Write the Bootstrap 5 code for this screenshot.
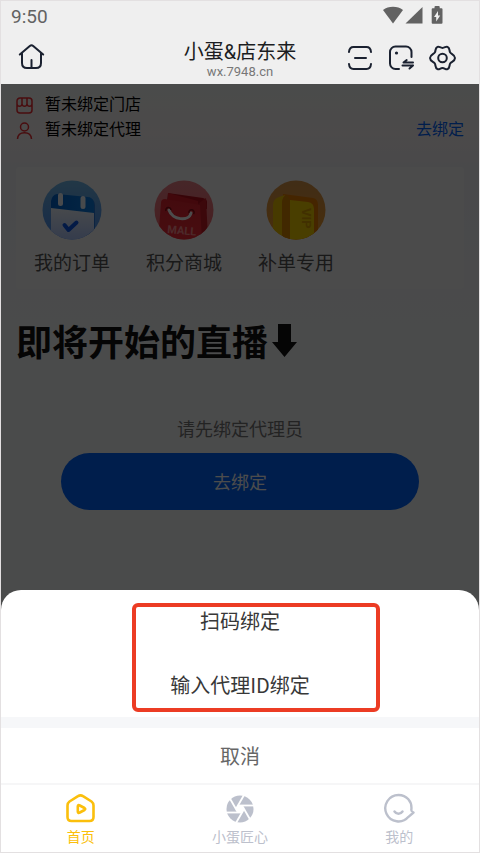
<!DOCTYPE html>
<html lang="zh-CN">
<head>
<meta charset="utf-8">
<meta name="viewport" content="width=device-width, initial-scale=1">
<title>小蛋&amp;店东来</title>
<link href="https://cdn.jsdelivr.net/npm/bootstrap@5.3.0/dist/css/bootstrap.min.css" rel="stylesheet">
<style>
body{font-family:"Noto Sans CJK SC",sans-serif;background:#fff}
svg{display:block;flex:none}
a{text-decoration:none}
button{font-family:inherit}
.latin{font-family:Roboto,sans-serif}
.app-shell{border:1px solid #e3e0e1}
.app-top{background:#efefef;color:#1b1d22}
.status-row{height:30px;color:#626262}
.clock{font-size:19px;line-height:32px;padding-left:10px}
.status-icons{margin-right:24px}
.title-row{height:53px;padding:0 23px 0 17px}
.side-zone{flex:1 1 0}
.title-zone{padding-left:6px}
.app-title{font-family:Roboto,"Noto Sans CJK SC",sans-serif;font-size:20px;line-height:24px;font-weight:400;padding-top:4px}
.app-url{font-size:13px;line-height:16px;color:#777}
.icon-btn{border:0;background:none;padding:0;color:#1a2130}
.tool-gap{gap:14px}
.stage{background:linear-gradient(#f8fcfa 0,#fdf7f7 50px,#f4f5f9 90px,#f9fafc 240px)}
.bind-info{font-size:16px;line-height:25px;color:#000;padding:7px 15px 0 15px}
.bind-info svg{color:#f22c32;margin-top:4px}
.bind-link{color:#0066ff}
.menu-card{background:#fbfbfb;margin:26px 15px 0;padding:13px 0;border-radius:4px}
.menu-card a{width:25%;color:#555;font-size:19px;line-height:28px;gap:8px}
.live-title{font-size:36px;line-height:48px;font-weight:700;color:#111;margin:27px 0 0 15px;gap:4px}
.tip{font-size:18px;line-height:26px;color:#777;margin-top:51px}
.bind-btn{background:#0066ff;color:#fff;font-size:18px;line-height:26px;padding:15px 15px 16px;margin:12px 60px 0;border:0}
.dim{position:absolute;inset:0;background:rgba(0,0,0,.7)}
.sheet{position:absolute;left:0;right:0;bottom:0;background:#fff;border-radius:20px 20px 0 0;overflow:hidden}
.sheet button{display:block;width:100%;border:0;background:none;color:#383838;font-size:20px;line-height:28px}
.choice{padding:18px 0}
.choice:first-child{padding-top:17px}
.cancel-row{border-top:11px solid #f6f7f9 !important;padding:14px 0 13px}
.sheet .cancel-row{color:#666}
.callout-frame{position:absolute;left:50%;top:13px;width:248px;height:109px;margin-left:-108px;border:4px solid #ec3c24;border-radius:6px;pointer-events:none}
.tabs{border-top:2px solid #f6f6f7;background:#fff;padding:7px 0 6px}
.tabs a{flex:1 1 0;color:#bcc0cc;font-size:14px;line-height:20px}
.tabs a.on{color:#fbbf0c}
</style>
<script src="https://cdn.jsdelivr.net/npm/bootstrap@5.3.0/dist/js/bootstrap.bundle.min.js"></script>
</head>
<body>
<div class="app-shell min-vh-100 d-flex flex-column">
  <header class="app-top">
    <div class="status-row latin d-flex justify-content-between">
      <span class="clock">9:50</span>
      <svg class="status-icons" width="90" height="30" viewBox="0 0 90 30" fill="#626262" aria-hidden="true">
        <path d="M18 9C21 6.500 24 5.800 28 5.800s7 .7 10 3.200L28 22.500z"/>
        <path d="M57.500 6v16.500h-17z"/>
        <path fill-rule="evenodd" d="M70.500 5h3.200a1 1 0 0 1 1 1v1.200H76.500a1 1 0 0 1 1 1v13.600a1 1 0 0 1-1 1h-8.800a1 1 0 0 1-1-1V8.200a1 1 0 0 1 1-1h1.800V6a1 1 0 0 1 1-1zM73 10l-4 6h2.200v4.500l4-6H73z"/>
      </svg>
    </div>
    <div class="title-row d-flex align-items-center">
      <div class="side-zone">
        <button class="icon-btn" aria-label="主页">
          <svg width="27" height="28" viewBox="0 -1 27 28" fill="none" stroke="currentColor" stroke-width="2" stroke-linecap="round" stroke-linejoin="round"><path d="M1.800 12.500 11.800 4a2.600 2.600 0 0 1 3.400 0l10 8.500M4 11.500V21c0 3.500 1.500 5 5 5h9c3.500 0 5-1.500 5-5v-9.500M13.500 18v7"/></svg>
        </button>
      </div>
      <div class="title-zone text-center">
        <h1 class="app-title m-0">小蛋&amp;店东来</h1>
        <div class="app-url latin">wx.7948.cn</div>
      </div>
      <div class="side-zone d-flex justify-content-end tool-gap">
        <button class="icon-btn" aria-label="扫一扫">
          <svg width="26" height="28" viewBox="0 0 26 28" fill="none" stroke="currentColor" stroke-width="2" stroke-linecap="round"><path d="M2 8C2.300 4.500 4 3 6.500 3h13c2.500 0 4.200 1.500 4.500 5M2 20c.3 3.500 2 5 4.500 5h13c2.500 0 4.200-1.500 4.500-5M8 14h11"/></svg>
        </button>
        <button class="icon-btn" aria-label="切换">
          <svg width="28" height="28" viewBox="0 0 28 28" fill="none" stroke="currentColor" stroke-width="2" stroke-linecap="round" stroke-linejoin="round"><path d="M12 25H8.500A5.500 5.500 0 0 1 3 19.500V8a5.500 5.500 0 0 1 5.500-5.500H19A5.500 5.500 0 0 1 24.500 8v5M16.500 18.500H26M16.500 18.500l3.200-2.500M15.500 21.500H26M26 21.500 22.500 24.500"/><circle cx="9.500" cy="9" r="1.600" fill="currentColor" stroke="none"/></svg>
        </button>
        <button class="icon-btn" aria-label="设置">
          <svg width="27" height="28" viewBox="0 0 27 28" fill="none" stroke="currentColor" stroke-width="2" stroke-linejoin="round"><path d="M8.500 2.900c1.600-.8 2.700 1 5 1s3.400-1.800 5-1c2.600 1.300 1.600 3.500 2.600 5.500 1 1.900 4.900 2.200 4.900 5.600s-3.900 3.700-4.900 5.600c-1 2 0 4.200-2.600 5.500-1.600.8-2.700-1-5-1s-3.400 1.800-5 1c-2.600-1.300-1.600-3.500-2.600-5.500-1-1.900-4.900-2.200-4.900-5.600s3.900-3.700 4.900-5.600c1-2 0-4.200 2.600-5.500z"/><circle cx="13.500" cy="14" r="4.300"/></svg>
        </button>
      </div>
    </div>
  </header>

  <main class="stage flex-grow-1 position-relative">
    <section class="bind-info">
      <div class="d-flex align-items-center gap-2"><svg class="me-1" width="17" height="17" viewBox="0 0 17 17" fill="none" stroke="currentColor" stroke-width="1.500"><path d="M4 1h9a3 3 0 0 1 3 3v9a3 3 0 0 1-3 3H4a3 3 0 0 1-3-3V4a3 3 0 0 1 3-3zM6 1v6M11 1v6M1 7c.5 3 4.500 3 5 0 .5 3 4.500 3 5 0 .5 3 4.500 3 5 0"/></svg><span>暂未绑定门店</span></div>
      <div class="d-flex align-items-center gap-2"><svg class="me-1" width="17" height="17" viewBox="0 0 17 17" fill="none" stroke="currentColor" stroke-width="1.500"><circle cx="8.500" cy="5" r="4"/><path d="M1.500 17c.3-4.200 3-6.200 7-6.200s6.700 2 7 6.200"/></svg><span>暂未绑定代理</span><a class="bind-link ms-auto" href="#">去绑定</a></div>
    </section>

    <nav class="menu-card d-flex" aria-label="快捷入口">
      <a class="d-flex flex-column align-items-center" href="#">
        <svg width="60" height="60" viewBox="0 0 60 60" aria-hidden="true">
          <defs><clipPath id="disc"><circle cx="30" cy="30" r="29.500"/></clipPath>
          <linearGradient id="sky" x2="0" y2="1"><stop stop-color="#72b9ea"/><stop offset="1" stop-color="#4d8df0"/></linearGradient>
          <linearGradient id="bar" x2="1" y2="0"><stop stop-color="#0065cf"/><stop offset="1" stop-color="#0c7fe6"/></linearGradient>
          <linearGradient id="sheetfill" x2="0" y2="1"><stop stop-color="#eef6ff"/><stop offset="1" stop-color="#b0c8ff"/></linearGradient></defs>
          <g clip-path="url(#disc)"><path fill="url(#sky)" d="M0 0h60v60H0z"/><path fill="#2977d5" d="m47 17 4 3q2 2 2 5v27l-9 8z"/><path fill="url(#bar)" d="M15 14l31 3q6 1 6 7v10L9 29v-8q1-6 6-7z"/><path fill="url(#sheetfill)" d="M9 28l43 5v27H9z"/><path d="M18.500 15.500v8M41 18.500v8" stroke="#f2f8ff" stroke-width="5" stroke-linecap="round"/><path d="m22.500 45 4 5 8-7.500" fill="none" stroke="#0a57ea" stroke-width="4" stroke-linecap="round" stroke-linejoin="round"/></g>
        </svg><span>我的订单</span>
      </a>
      <a class="d-flex flex-column align-items-center" href="#">
        <svg width="60" height="60" viewBox="0 0 60 60" aria-hidden="true">
          <defs><linearGradient id="rose" x2="0" y2="1"><stop stop-color="#ec8189"/><stop offset="1" stop-color="#f0666c"/></linearGradient>
          <linearGradient id="bag" x2="0" y2="1"><stop stop-color="#e32430"/><stop offset="1" stop-color="#f22c38"/></linearGradient></defs>
          <g clip-path="url(#disc)"><path fill="url(#rose)" d="M0 0h60v60H0z"/><path fill="#b90e1c" d="m14 13 35 5q4 1 4 4v7H12z"/><path fill="#dc1d2a" d="m14 13 30 8v5l-30-6z"/><path fill="#c91b27" d="m44 24 8-6 2 41-8 2z"/><path fill="url(#bag)" d="M11 19q-4 0-4 4L4 60h44l-2-35z"/><path d="M15 30c3 10 20 12 22 3" fill="none" stroke="#fff" stroke-width="3" stroke-linecap="round"/><path d="M12 31a2.600 2.600 0 1 1 5-1M35 33a2.600 2.600 0 1 1 4.500 1" fill="none" stroke="#8d0a14" stroke-width="1.500"/></g><text x="13" y="53" font-family="Roboto,sans-serif" font-size="11" font-weight="700" fill="#ff8d90" transform="rotate(5 13 53)">MALL</text>
        </svg><span>积分商城</span>
      </a>
      <a class="d-flex flex-column align-items-center" href="#">
        <svg width="60" height="60" viewBox="0 0 60 60" aria-hidden="true">
          <defs><linearGradient id="amber" x2="0" y2="1"><stop stop-color="#d9964c"/><stop offset="1" stop-color="#f09a28"/></linearGradient></defs>
          <g clip-path="url(#disc)"><path fill="url(#amber)" d="M0 0h60v60H0z"/><path fill="#e87c00" d="m17 14 30 4q5 1 5 7v35H17z"/><path fill="#efc400" d="M7 25q0-6 6-8l6-2-3 7v38H7z"/><path fill="#d98600" d="M16 23q0-7 5-8l4 6v39h-9z"/><path fill="#f5d000" d="m24 20 18 2q6 1 6 7v31H24z"/></g><text x="36" y="28" font-family="Roboto,sans-serif" font-size="13" font-weight="700" fill="#dba000" transform="rotate(90 36 28)">VIP</text>
        </svg><span>补单专用</span>
      </a>
    </nav>

    <h2 class="live-title d-flex align-items-center mb-0">即将开始的直播<svg width="25" height="33" viewBox="0 0 25 33" fill="currentColor" role="img" aria-label="向下"><path d="M6 0h13v18h6L12.500 33 0 18h6z"/></svg></h2>
    <p class="tip text-center mb-0">请先绑定代理员</p>
    <div class="d-grid"><button class="bind-btn rounded-pill">去绑定</button></div>

    <div class="dim"></div>
    <section class="sheet" role="dialog" aria-label="绑定方式">
      <button class="choice">扫码绑定</button>
      <button class="choice">输入代理ID绑定</button>
      <button class="cancel-row">取消</button>
      <div class="callout-frame"></div>
    </section>
  </main>

  <nav class="tabs d-flex" aria-label="主导航">
    <a class="on d-flex flex-column align-items-center" href="#"><svg width="32" height="34" viewBox="0 -1 32 34" fill="none" stroke="currentColor" stroke-width="2.600" stroke-linejoin="round"><path d="M13 3.200 4.500 8.500Q2.500 10 2.500 12.500V24q0 4 4 4h18q4 0 4-4V12.500q0-2.500-2-4L18 3.200q-2.500-1.700-5 0z"/><path d="M12.800 13.500v5q0 2 2 1l4.700-2.500q1.500-1 0-2L14.800 12.500q-2-1-2 1z"/></svg><span>首页</span></a>
    <a class="d-flex flex-column align-items-center" href="#"><svg width="32" height="34" viewBox="-16 -17 32 34"><circle r="13.500" fill="currentColor"/><g fill="none" stroke="#fff" stroke-width="1.800"><path id="blade" d="M-2-3.500H15"/><use href="#blade" transform="rotate(60)"/><use href="#blade" transform="rotate(120)"/><use href="#blade" transform="rotate(180)"/><use href="#blade" transform="rotate(240)"/><use href="#blade" transform="rotate(300)"/></g><path fill="#fff" d="M-2-3.500h4L4 0 2 3.500h-4L-4 0z"/></svg><span>小蛋匠心</span></a>
    <a class="d-flex flex-column align-items-center" href="#"><svg width="32" height="34" viewBox="0 -1 32 34" fill="none" stroke="currentColor" stroke-width="2.400" stroke-linecap="round" stroke-linejoin="round"><path d="M28.300 17C29.500 8.500 23.500 2 15.500 2a13.200 13.200 0 1 0 10 21.800l5-4.300q-2-.5-2.200-2.500zM11.500 18.500c2 3 6 3 8 0"/></svg><span>我的</span></a>
  </nav>
</div>
</body>
</html>
